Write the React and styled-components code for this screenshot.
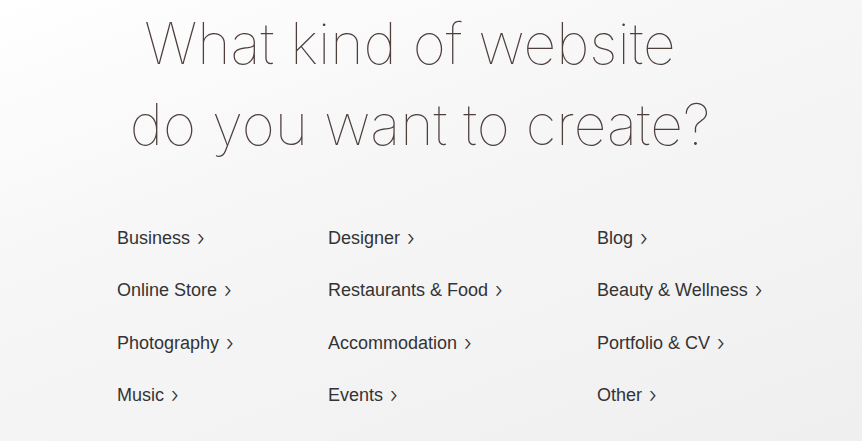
import React from 'react';
import styled, { createGlobalStyle } from 'styled-components';

const GlobalStyle = createGlobalStyle`
  html, body {
    margin: 0;
    padding: 0;
  }
  body {
    font-family: "Liberation Sans", Arial, sans-serif;
    background: #f4f4f4;
  }
`;

const Page = styled.div`
  width: 862px;
  height: 441px;
  overflow: hidden;
  box-sizing: border-box;
  background: linear-gradient(160deg, #ffffff 0%, #f7f7f7 35%, #efefef 100%);
  padding-top: 3px;
`;

const Heading = styled.h1`
  margin: 0;
  font-family: Inter, "Liberation Sans", sans-serif;
  font-weight: 100;
  font-size: 57px;
  line-height: 81px;
  color: #4e3f3d;
  letter-spacing: 0;
`;

const HeadingLine = styled.span`
  display: block;
  text-align: center;
  padding-right: ${({ shift }) => shift}px;
`;

const Grid = styled.div`
  display: grid;
  grid-template-columns: 211px 269px 200px;
  padding-left: 117px;
  margin-top: 62px;
`;

const Item = styled.a`
  display: flex;
  align-items: center;
  align-self: start;
  height: 22px;
  margin-bottom: 30.4px;
  font-size: 18px;
  line-height: 22px;
  color: #333336;
  text-decoration: none;
  white-space: nowrap;
`;

const Chevron = styled.span`
  margin-left: 7px;
  font-family: Inter, "Liberation Sans", sans-serif;
  font-weight: 300;
  font-size: 21px;
  line-height: 22px;
  color: #333;
`;

const items = [
  'Business', 'Designer', 'Blog',
  'Online Store', 'Restaurants & Food', 'Beauty & Wellness',
  'Photography', 'Accommodation', 'Portfolio & CV',
  'Music', 'Events', 'Other',
];

export default function App() {
  return (
    <>
      <GlobalStyle />
      <Page>
        <Heading>
          <HeadingLine shift={42}>What kind of website</HeadingLine>
          <HeadingLine shift={22}>do you want to create?</HeadingLine>
        </Heading>
        <Grid>
          {items.map((label) => (
            <Item key={label} href="#">
              {label}
              <Chevron>›</Chevron>
            </Item>
          ))}
        </Grid>
      </Page>
    </>
  );
}
